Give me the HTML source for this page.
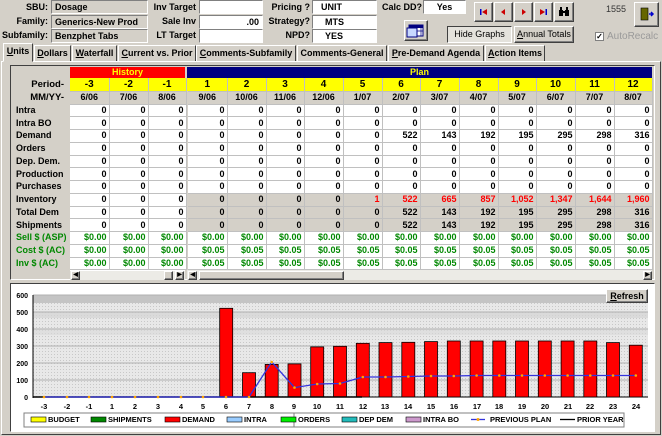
<!DOCTYPE html>
<html><head><meta charset="utf-8">
<style>
*{box-sizing:border-box;margin:0;padding:0}
body{width:662px;height:436px;background:#d4d0c8;font-family:"Liberation Sans",Arial,sans-serif;font-size:10px;font-weight:bold;position:relative;overflow:hidden;color:#000}
.a{position:absolute}
.lbl{position:absolute;text-align:right;font-size:9px;line-height:13px;white-space:nowrap}
.fld{position:absolute;height:14px;border:1px solid;border-color:#808080 #fff #fff #808080;background:#fff;font-size:9px;line-height:12px;padding-left:3px;white-space:nowrap;overflow:hidden}
.fg{background:#d4d0c8}
.btn{position:absolute;background:#d4d0c8;border:1px solid;border-color:#fff #404040 #404040 #fff;box-shadow:inset -1px -1px 0 #808080;white-space:nowrap;overflow:hidden}
.tab{position:absolute;top:45px;height:17px;border:1px solid;border-color:#fff #404040 transparent #fff;font-size:9px;line-height:14px;text-align:center;white-space:nowrap;overflow:hidden}
.tab u{text-decoration:underline}
table{border-collapse:collapse;table-layout:fixed;position:absolute;left:12px;top:67px}
td{font-size:9px;font-weight:bold;text-align:right;padding:0 2px 0 0;height:12.75px;line-height:11px;border-right:1px solid #c0c0c0;border-bottom:1px solid #c0c0c0;background:#fff;white-space:nowrap;overflow:hidden}
td.l{background:#d4d0c8;text-align:left;padding-left:4px;border:none;font-size:9px}
td.sep{background:#d4d0c8;border:none;border-left:1px solid #808080;width:2px;padding:0}
td.g{background:#d4d0c8}
.r{color:#f00}
.gr td{color:#080}
td.l.gc{color:#080}
tr.y td{background:#ff0;text-align:center;padding:0;height:13px;font-size:10px}
tr.m td{background:#d4d0c8;text-align:center;padding:0;height:13px;font-size:9px}
tr.y td.l,tr.m td.l{background:#d4d0c8;text-align:right;padding-right:6px;font-size:9.5px}
</style></head><body>
<div class="lbl" style="left:0;width:48px;top:1px">SBU:</div>
<div class="fld fg" style="left:51px;top:0;width:97px">Dosage</div>
<div class="lbl" style="left:0;width:48px;top:15px">Family:</div>
<div class="fld fg" style="left:51px;top:15px;width:97px">Generics-New Prod</div>
<div class="lbl" style="left:0;width:48px;top:29px">Subfamily:</div>
<div class="fld fg" style="left:51px;top:29px;width:97px">Benzphet Tabs</div>
<div class="lbl" style="left:140px;width:56px;top:1px">Inv Target</div>
<div class="fld" style="left:199px;top:0;width:64px"></div>
<div class="lbl" style="left:140px;width:56px;top:15px">Sale Inv</div>
<div class="fld" style="left:199px;top:15px;width:64px;text-align:right;padding-right:3px">.00</div>
<div class="lbl" style="left:140px;width:56px;top:29px">LT Target</div>
<div class="fld" style="left:199px;top:29px;width:64px"></div>
<div class="lbl" style="left:255px;width:55px;top:1px">Pricing ?</div>
<div class="fld" style="left:312px;top:0;width:65px;padding-left:8px">UNIT</div>
<div class="lbl" style="left:255px;width:55px;top:15px">Strategy?</div>
<div class="fld" style="left:312px;top:15px;width:65px;padding-left:12px">MTS</div>
<div class="lbl" style="left:255px;width:55px;top:29px">NPD?</div>
<div class="fld" style="left:312px;top:29px;width:65px;padding-left:12px">YES</div>
<div class="lbl" style="left:376px;width:46px;top:1px">Calc DD?</div>
<div class="fld" style="left:423px;top:0;width:43px;text-align:center;padding:0">Yes</div>
<div class="btn" style="left:404px;top:20px;width:24px;height:21px">
<svg width="22" height="19" class="a" style="left:0;top:0"><rect x="4" y="4" width="14" height="11" fill="#fff" stroke="#000080"/><rect x="4" y="4" width="14" height="3" fill="#000080"/><path d="M4 10H18M8 7V15M12 7V15M16 7V15" stroke="#000080" stroke-width=".7"/><rect x="2" y="7" width="10" height="9" fill="#c8d8ff" stroke="#000080"/></svg></div>
<div class="btn" style="left:474px;top:2px;width:19px;height:20px"><svg width="17" height="18"><rect x="5" y="6" width="1.5" height="6" fill="#00c"/><path d="M12 6L7 9L12 12Z" fill="#c00"/></svg></div>
<div class="btn" style="left:494px;top:2px;width:19px;height:20px"><svg width="17" height="18"><path d="M10 6L6 9L10 12Z" fill="#c00"/></svg></div>
<div class="btn" style="left:514px;top:2px;width:19px;height:20px"><svg width="17" height="18"><path d="M7 6L11 9L7 12Z" fill="#c00"/></svg></div>
<div class="btn" style="left:534px;top:2px;width:19px;height:20px"><svg width="17" height="18"><path d="M5 6L10 9L5 12Z" fill="#c00"/><rect x="10.5" y="6" width="1.5" height="6" fill="#00c"/></svg></div>
<div class="btn" style="left:554px;top:2px;width:20px;height:20px"><svg width="18" height="18"><rect x="4" y="7" width="4" height="6" fill="#000"/><rect x="10" y="7" width="4" height="6" fill="#000"/><rect x="5" y="4" width="2" height="4" fill="#000"/><rect x="11" y="4" width="2" height="4" fill="#000"/><rect x="7" y="8" width="4" height="2" fill="#000"/></svg></div>
<div class="a" style="left:606px;top:4px;font-weight:normal;font-size:9px;color:#333">1555</div>
<div class="btn" style="left:634px;top:2px;width:25px;height:25px"><svg width="23" height="23"><rect x="6" y="5" width="7" height="12" fill="#660" stroke="#000" stroke-width=".6"/><path d="M14 11h4M16 9l2 2-2 2" stroke="#00c" fill="none" stroke-width="1.5"/></svg></div>
<div class="a" style="left:447px;top:26px;width:65px;height:17px;background:#e4e2dc;border:1px solid;border-color:#404040 #fff #fff #404040;font-weight:normal;font-size:9px;text-align:center;line-height:15px">Hide Graphs</div>
<div class="btn" style="left:514px;top:26px;width:60px;height:17px;font-weight:normal;font-size:9px;text-align:center;line-height:14px"><u>A</u>nnual Totals</div>
<div class="a" style="left:595px;top:32px;width:9px;height:9px;background:#fff;border:1px solid #808080;font-size:8px;line-height:7px;text-align:center">✓</div>
<div class="a" style="left:607px;top:31px;font-weight:normal;font-size:10px;color:#9a9a9a">AutoRecalc</div>
<div class="tab" style="left:3px;top:43px;width:30px;height:19px;background:#d4d0c8;z-index:2"><u>U</u>nits</div>
<div class="tab" style="left:34px;width:37px"><u>D</u>ollars</div>
<div class="tab" style="left:72px;width:45px"><u>W</u>aterfall</div>
<div class="tab" style="left:118px;width:78px"><u>C</u>urrent vs. Prior</div>
<div class="tab" style="left:196px;width:100px"><u>C</u>omments-Subfamily</div>
<div class="tab" style="left:297px;width:90px">Comments-General</div>
<div class="tab" style="left:388px;width:96px"><u>P</u>re-Demand Agenda</div>
<div class="tab" style="left:485px;width:60px"><u>A</u>ction Items</div>
<div class="a" style="left:1px;top:61px;width:660px;height:374px;border:1px solid;border-color:#fff #404040 #404040 #fff"></div>
<div class="a" style="left:10px;top:65px;width:645px;height:215px;border:1px solid;border-color:#404040 #fff #fff #404040"></div>
<div class="a" style="left:70px;top:67px;width:115px;height:11px;background:#f00;color:#ff0;text-align:center;font-size:9px;line-height:11px">History</div>
<div class="a" style="left:187px;top:67px;width:465px;height:11px;background:#000080;color:#ff0;text-align:center;font-size:9px;line-height:11px">Plan</div>
<table style="top:78px">
<colgroup><col style="width:58px"><col style="width:39px"><col style="width:39px"><col style="width:38px"><col style="width:2px"><col style="width:39px"><col style="width:39px"><col style="width:38px"><col style="width:39px"><col style="width:39px"><col style="width:38px"><col style="width:39px"><col style="width:39px"><col style="width:38px"><col style="width:39px"><col style="width:39px"><col style="width:38px"></colgroup>
<tr class="y"><td class="l">Period-</td><td>-3</td><td>-2</td><td>-1</td><td class="sep"></td><td>1</td><td>2</td><td>3</td><td>4</td><td>5</td><td>6</td><td>7</td><td>8</td><td>9</td><td>10</td><td>11</td><td>12</td></tr>
<tr class="m"><td class="l">MM/YY-</td><td>6/06</td><td>7/06</td><td>8/06</td><td class="sep"></td><td>9/06</td><td>10/06</td><td>11/06</td><td>12/06</td><td>1/07</td><td>2/07</td><td>3/07</td><td>4/07</td><td>5/07</td><td>6/07</td><td>7/07</td><td>8/07</td></tr>
<tr><td class="l">Intra</td><td>0</td><td>0</td><td>0</td><td class="sep"></td><td>0</td><td>0</td><td>0</td><td>0</td><td>0</td><td>0</td><td>0</td><td>0</td><td>0</td><td>0</td><td>0</td><td>0</td></tr>
<tr><td class="l">Intra BO</td><td>0</td><td>0</td><td>0</td><td class="sep"></td><td>0</td><td>0</td><td>0</td><td>0</td><td>0</td><td>0</td><td>0</td><td>0</td><td>0</td><td>0</td><td>0</td><td>0</td></tr>
<tr><td class="l">Demand</td><td>0</td><td>0</td><td>0</td><td class="sep"></td><td>0</td><td>0</td><td>0</td><td>0</td><td>0</td><td>522</td><td>143</td><td>192</td><td>195</td><td>295</td><td>298</td><td>316</td></tr>
<tr><td class="l">Orders</td><td>0</td><td>0</td><td>0</td><td class="sep"></td><td>0</td><td>0</td><td>0</td><td>0</td><td>0</td><td>0</td><td>0</td><td>0</td><td>0</td><td>0</td><td>0</td><td>0</td></tr>
<tr><td class="l">Dep. Dem.</td><td>0</td><td>0</td><td>0</td><td class="sep"></td><td>0</td><td>0</td><td>0</td><td>0</td><td>0</td><td>0</td><td>0</td><td>0</td><td>0</td><td>0</td><td>0</td><td>0</td></tr>
<tr><td class="l">Production</td><td>0</td><td>0</td><td>0</td><td class="sep"></td><td>0</td><td>0</td><td>0</td><td>0</td><td>0</td><td>0</td><td>0</td><td>0</td><td>0</td><td>0</td><td>0</td><td>0</td></tr>
<tr><td class="l">Purchases</td><td>0</td><td>0</td><td>0</td><td class="sep"></td><td>0</td><td>0</td><td>0</td><td>0</td><td>0</td><td>0</td><td>0</td><td>0</td><td>0</td><td>0</td><td>0</td><td>0</td></tr>
<tr><td class="l">Inventory</td><td>0</td><td>0</td><td>0</td><td class="sep"></td><td class="g">0</td><td class="g">0</td><td class="g">0</td><td class="g">0</td><td class="g r">1</td><td class="g r">522</td><td class="g r">665</td><td class="g r">857</td><td class="g r">1,052</td><td class="g r">1,347</td><td class="g r">1,644</td><td class="g r">1,960</td></tr>
<tr><td class="l">Total Dem</td><td>0</td><td>0</td><td>0</td><td class="sep"></td><td class="g">0</td><td class="g">0</td><td class="g">0</td><td class="g">0</td><td class="g">0</td><td class="g">522</td><td class="g">143</td><td class="g">192</td><td class="g">195</td><td class="g">295</td><td class="g">298</td><td class="g">316</td></tr>
<tr><td class="l">Shipments</td><td>0</td><td>0</td><td>0</td><td class="sep"></td><td class="g">0</td><td class="g">0</td><td class="g">0</td><td class="g">0</td><td class="g">0</td><td class="g">522</td><td class="g">143</td><td class="g">192</td><td class="g">195</td><td class="g">295</td><td class="g">298</td><td class="g">316</td></tr>
<tr class="gr"><td class="l gc">Sell $ (ASP)</td><td>$0.00</td><td>$0.00</td><td>$0.00</td><td class="sep"></td><td>$0.00</td><td>$0.00</td><td>$0.00</td><td>$0.00</td><td>$0.00</td><td>$0.00</td><td>$0.00</td><td>$0.00</td><td>$0.00</td><td>$0.00</td><td>$0.00</td><td>$0.00</td></tr>
<tr class="gr"><td class="l gc">Cost $ (AC)</td><td>$0.00</td><td>$0.00</td><td>$0.00</td><td class="sep"></td><td>$0.05</td><td>$0.05</td><td>$0.05</td><td>$0.05</td><td>$0.05</td><td>$0.05</td><td>$0.05</td><td>$0.05</td><td>$0.05</td><td>$0.05</td><td>$0.05</td><td>$0.05</td></tr>
<tr class="gr"><td class="l gc">Inv $ (AC)</td><td>$0.00</td><td>$0.00</td><td>$0.00</td><td class="sep"></td><td>$0.05</td><td>$0.05</td><td>$0.05</td><td>$0.05</td><td>$0.05</td><td>$0.05</td><td>$0.05</td><td>$0.05</td><td>$0.05</td><td>$0.05</td><td>$0.05</td><td>$0.05</td></tr>
</table>
<div class="a" style="left:70px;top:270px;width:115px;height:10px;background:#ecebe6;border-top:1px solid #fff"></div>
<div class="btn" style="left:71px;top:271px;width:9px;height:9px;font-size:6px;line-height:7px;text-align:center">◀</div>
<div class="btn" style="left:164px;top:271px;width:9px;height:9px"></div>
<div class="btn" style="left:175px;top:271px;width:9px;height:9px;font-size:6px;line-height:7px;text-align:center">▶</div>
<div class="a" style="left:187px;top:270px;width:465px;height:10px;background:#ecebe6"></div>
<div class="btn" style="left:188px;top:271px;width:9px;height:9px;font-size:6px;line-height:7px;text-align:center">◀</div>
<div class="btn" style="left:199px;top:271px;width:145px;height:9px"></div>
<div class="btn" style="left:643px;top:271px;width:9px;height:9px;font-size:6px;line-height:7px;text-align:center">▶</div>
<div class="a" style="left:10px;top:283px;width:645px;height:149px;background:#fff;border:1px solid;border-color:#404040 #fff #fff #404040"></div>
<svg class="a" style="left:0;top:0" width="662" height="436" font-family="Liberation Sans, Arial, sans-serif" font-weight="bold">
<defs><pattern id="d" width="3" height="3" patternUnits="userSpaceOnUse"><rect width="3" height="3" fill="#e8e8e8"/><rect width="1" height="1" fill="#c8c8c8"/></pattern></defs>
<rect x="33" y="295" width="615" height="102" fill="url(#d)"/>
<rect x="33" y="295" width="615" height="8" fill="#c4c4c4"/>
<rect x="33" y="312" width="615" height="6" fill="#d4d4d4" opacity=".7"/>
<rect x="33" y="329" width="615" height="6" fill="#d8d8d8" opacity=".6"/>
<g stroke="#b0b0b0" stroke-width="1"><path d="M33 380H648M33 363H648M33 346H648M33 329H648M33 312H648M33 295H648"/></g>
<path d="M33 295V398M33 397H648" stroke="#000"/>
<g font-size="7" text-anchor="end"><text x="28" y="298">600</text><text x="28" y="315">500</text><text x="28" y="332">400</text><text x="28" y="349">300</text><text x="28" y="366">200</text><text x="28" y="383">100</text><text x="28" y="400">0</text></g>
<g fill="#f00" stroke="#000" stroke-width=".8">
<rect x="219.7" y="308.3" width="13" height="88.7"/>
<rect x="242.5" y="372.7" width="13" height="24.3"/>
<rect x="265.2" y="364.4" width="13" height="32.6"/>
<rect x="288" y="363.9" width="13" height="33.1"/>
<rect x="310.7" y="346.9" width="13" height="50.1"/>
<rect x="333.5" y="346.3" width="13" height="50.7"/>
<rect x="356.3" y="343.3" width="13" height="53.7"/>
<rect x="379" y="342.6" width="13" height="54.4"/>
<rect x="401.8" y="342.3" width="13" height="54.7"/>
<rect x="424.5" y="341.6" width="13" height="55.4"/>
<rect x="447.3" y="341" width="13" height="56"/>
<rect x="470.1" y="341" width="13" height="56"/>
<rect x="492.8" y="341" width="13" height="56"/>
<rect x="515.5" y="341" width="13" height="56"/>
<rect x="538.3" y="341" width="13" height="56"/>
<rect x="561.1" y="341" width="13" height="56"/>
<rect x="583.8" y="341" width="13" height="56"/>
<rect x="606.5" y="342.6" width="13" height="54.4"/>
<rect x="629.3" y="345.2" width="13" height="51.8"/>
</g>
<path d="M33 397H362" stroke="#000" stroke-width="1.5"/>
<polyline fill="none" stroke="#3333dd" stroke-width="1.3" points="44,397 249,397 271.7,362 294.5,387.6 317.2,384 340,383.5 362.8,377 385.5,377 408.3,376.5 431,376 453.8,376 476.6,375.5 499.3,375.5 522,375.5 544.8,375.5 567.6,375.5 590.3,375.5 613,375.5 635.8,375.5"/>
<g fill="#ffa500"><circle cx="44" cy="397" r="1.3"/><circle cx="67" cy="397" r="1.3"/><circle cx="89" cy="397" r="1.3"/><circle cx="112" cy="397" r="1.3"/><circle cx="135" cy="397" r="1.3"/><circle cx="158" cy="397" r="1.3"/><circle cx="181" cy="397" r="1.3"/><circle cx="203" cy="397" r="1.3"/><circle cx="226" cy="397" r="1.3"/><circle cx="249" cy="397" r="1.3"/><circle cx="271.7" cy="362" r="1.3"/><circle cx="294.5" cy="387.6" r="1.3"/><circle cx="317.2" cy="384" r="1.3"/><circle cx="340" cy="383.5" r="1.3"/><circle cx="362.8" cy="377" r="1.3"/><circle cx="385.5" cy="377" r="1.3"/><circle cx="408.3" cy="376.5" r="1.3"/><circle cx="431" cy="376" r="1.3"/><circle cx="453.8" cy="376" r="1.3"/><circle cx="476.6" cy="375.5" r="1.3"/><circle cx="499.3" cy="375.5" r="1.3"/><circle cx="522" cy="375.5" r="1.3"/><circle cx="544.8" cy="375.5" r="1.3"/><circle cx="567.6" cy="375.5" r="1.3"/><circle cx="590.3" cy="375.5" r="1.3"/><circle cx="613" cy="375.5" r="1.3"/><circle cx="635.8" cy="375.5" r="1.3"/></g>
<g font-size="7.5" text-anchor="middle"><text x="44" y="409">-3</text><text x="67" y="409">-2</text><text x="89" y="409">-1</text><text x="112" y="409">1</text><text x="135" y="409">2</text><text x="158" y="409">3</text><text x="181" y="409">4</text><text x="203" y="409">5</text><text x="226" y="409">6</text><text x="249" y="409">7</text><text x="272" y="409">8</text><text x="294" y="409">9</text><text x="317" y="409">10</text><text x="340" y="409">11</text><text x="363" y="409">12</text><text x="385" y="409">13</text><text x="408" y="409">14</text><text x="431" y="409">15</text><text x="454" y="409">16</text><text x="477" y="409">17</text><text x="499" y="409">18</text><text x="522" y="409">19</text><text x="545" y="409">20</text><text x="568" y="409">21</text><text x="590" y="409">22</text><text x="613" y="409">23</text><text x="636" y="409">24</text></g>
<rect x="24" y="413" width="270" height="14" fill="#fff" stroke="#808080"/>
<rect x="294" y="413" width="330" height="14" fill="#fff" stroke="#808080"/>
<g stroke="#000" stroke-width=".6">
<rect x="31" y="417" width="15" height="5" fill="#ff0"/><rect x="91" y="417" width="15" height="5" fill="#080"/><rect x="165" y="417" width="15" height="5" fill="#f00"/><rect x="227" y="417" width="15" height="5" fill="#9cf"/><rect x="281" y="417" width="15" height="5" fill="#0e0"/><rect x="342" y="417" width="15" height="5" fill="#2bb"/><rect x="406" y="417" width="15" height="5" fill="#c9c"/></g>
<path d="M471 419.5H485" stroke="#33d" stroke-width="1.3"/><circle cx="478" cy="419.5" r="1.5" fill="#ffa500"/>
<path d="M560 419.5H575" stroke="#000" stroke-width="1.3"/>
<g font-size="7.5"><text x="48" y="422">BUDGET</text><text x="108" y="422">SHIPMENTS</text><text x="182" y="422">DEMAND</text><text x="244" y="422">INTRA</text><text x="298" y="422">ORDERS</text><text x="359" y="422">DEP DEM</text><text x="423" y="422">INTRA BO</text><text x="490" y="422">PREVIOUS PLAN</text><text x="577" y="422">PRIOR YEAR</text></g>
</svg>
<div class="btn" style="left:606px;top:289px;width:42px;height:14px;font-size:9px;text-align:center;line-height:12px"><u>R</u>efresh</div>
</body></html>
